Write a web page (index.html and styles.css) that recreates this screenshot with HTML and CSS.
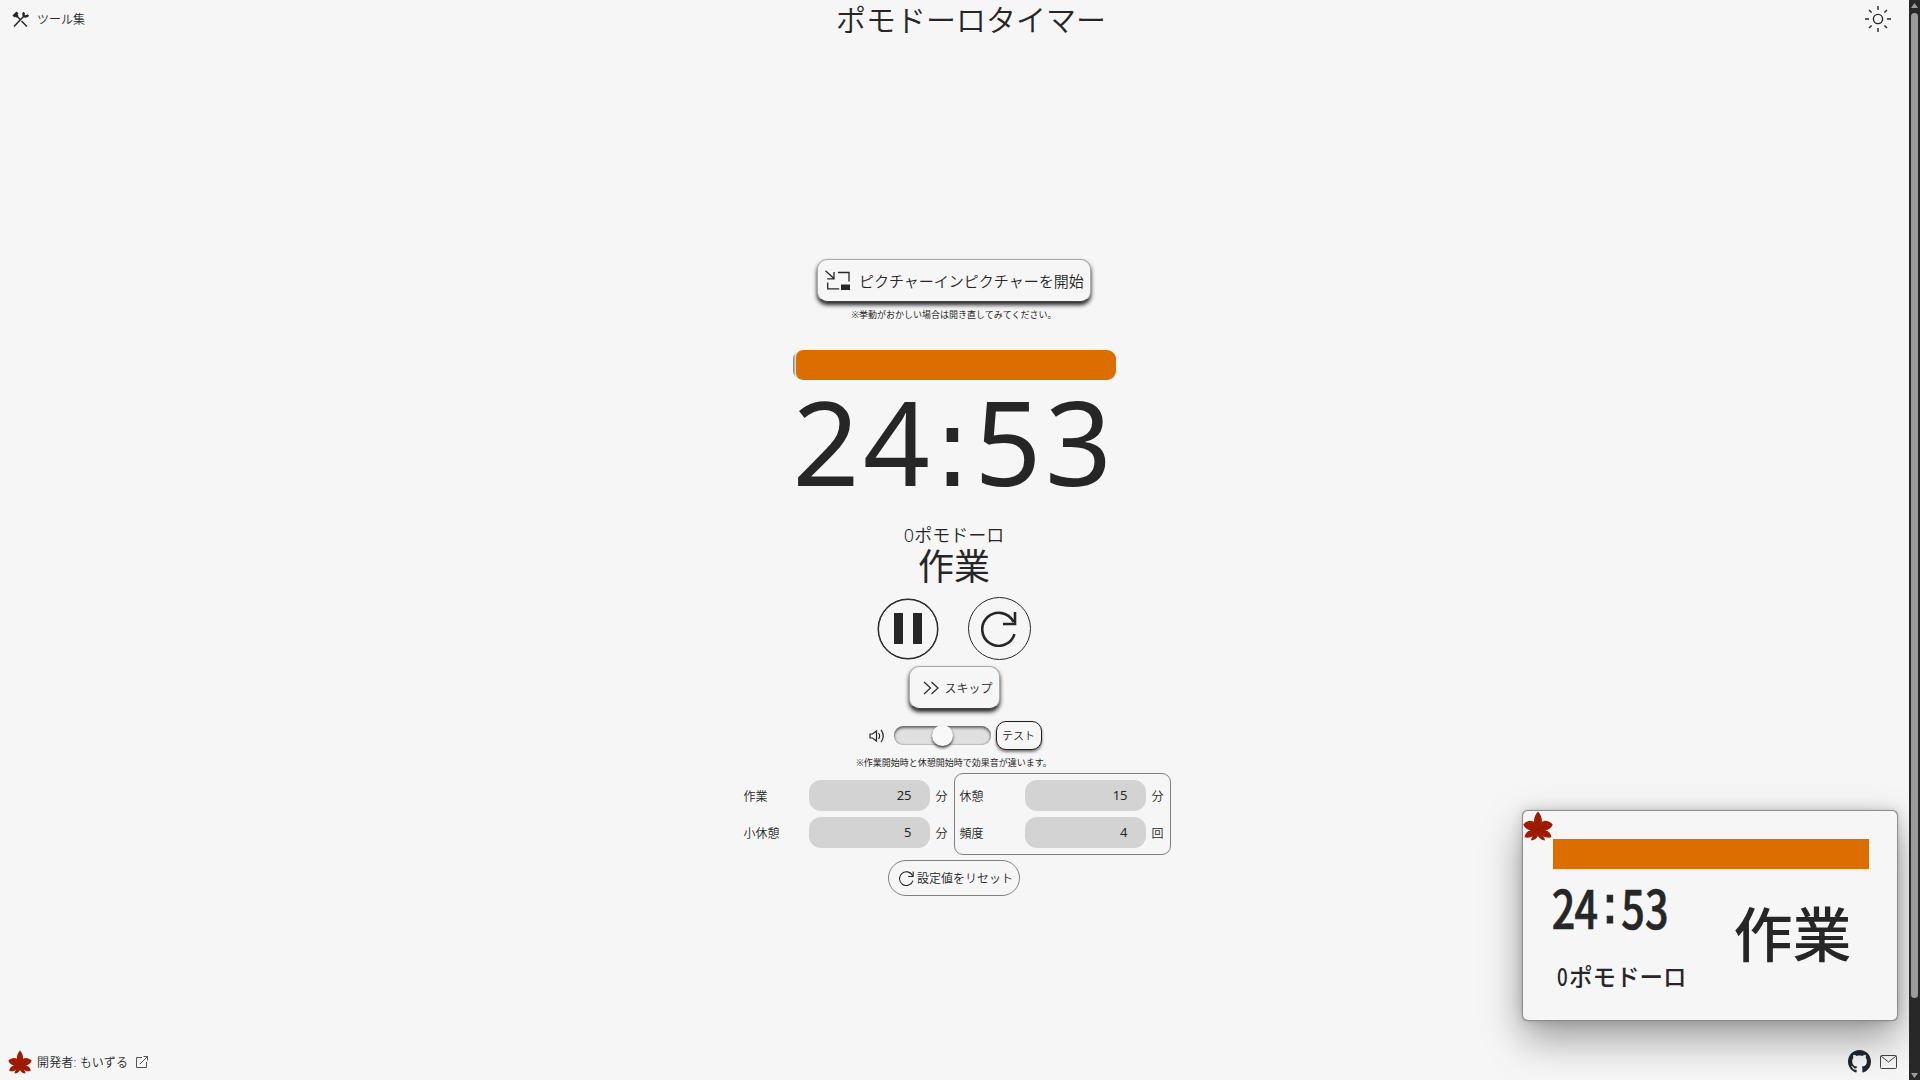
FILE: index.html
```html
<!DOCTYPE html>
<html lang="ja">
<head>
<meta charset="utf-8">
<title>ポモドーロタイマー</title>
<link rel="stylesheet" href="styles.css">
</head>
<body>
<svg class="defs" width="0" height="0" aria-hidden="true">
  <symbol id="maple" viewBox="0 0 30 30">
    <path fill="#a01c00" d="M15 .5C17.500 3.500 19.200 6.500 18.900 11 22 9 26 9.500 29.700 13.500 28 17.500 25.500 18.800 22.500 19.200 26 20.500 28 22.500 28.400 26.200 25.500 27.200 22.500 26.500 20 25 21.200 26.500 22 27.800 21.800 29.500 19 29 16.500 28 15.500 25.500H14.500C13.500 28 11 29 8.200 29.500 8 27.800 8.800 26.500 10 25 7.500 26.500 4.500 27.200 1.600 26.200 2 22.500 4 20.500 7.500 19.200 4.500 18.800 2 17.500.3 13.500 4 9.500 8 9 11.100 11 10.800 6.500 12.500 3.500 15 .5z"/>
    <path fill="none" stroke="#861500" stroke-width=".6" d="M15 8v10.500M6 14.500l9 4 9-4M7 24l8-5.500 8 5.500"/>
  </symbol>
  <symbol id="reload" viewBox="0 0 36 36">
    <path fill="none" stroke="currentColor" d="M33.500 23.200A16.500 16.500 0 1 1 32.500 11M34 1v12H22"/>
  </symbol>
</svg>
<div class="page">
  <header class="header">
    <a class="tools">
      <svg width="17" height="17" viewBox="0 0 17 17" fill="none" stroke="#262626">
        <path stroke-width="1.500" d="M4.500 4.500l4 4.500M9.500 10l5.500 5.500M2 15.500L12 5"/>
        <path stroke-width="3" d="M1.500 5.500l4-4M3 3.500l2.500 2"/>
        <path stroke-width="2.400" d="M12.200 1.500c-1.500 2-.5 4 1 4s2 0 3-1.500"/>
      </svg>
      <span>ツール集</span>
    </a>
    <h1 class="title">ポモドーロタイマー</h1>
    <svg class="sun" width="28" height="28" viewBox="0 0 28 28" fill="none" stroke="#262626" stroke-width="1.400">
      <circle cx="14" cy="14" r="4.600"/>
      <path d="M14 1v4M14 23v4M1 14h4M23 14h4M5 5l2.600 2.600M20.400 20.400L23 23M23 5l-2.600 2.600M7.600 20.400L5 23"/>
    </svg>
  </header>

  <main class="main">
    <button class="btn pip-btn">
      <svg width="26" height="21" viewBox="0 0 26 21" fill="none" stroke="#262626" stroke-width="1.300">
        <path d="M.5.700L9 8.500M9 2v6.800H2.200M13 2.500h11v9M2.700 12.500v6.300h11.500"/>
        <path fill="#262626" stroke="none" d="M16 14.500h9V20h-9z"/>
      </svg>
      <span>ピクチャーインピクチャーを開始</span>
    </button>
    <p class="note">※挙動がおかしい場合は開き直してみてください。</p>
    <div class="progress"><div class="progress-fill"></div></div>
    <div class="clock">24<span class="colon">:</span>53</div>
    <div class="count">0ポモドーロ</div>
    <div class="phase">作業</div>
    <div class="controls">
      <button class="round pause"><i></i><i></i></button>
      <button class="round restart"><svg width="36" height="36"><use href="#reload"/></svg></button>
    </div>
    <button class="btn skip">
      <svg width="16" height="14" viewBox="0 0 16 14" fill="none" stroke="#262626" stroke-width="1.200"><path d="M1 1l6.500 6L1 13M8.500 1L15 7l-6.500 6"/></svg>
      <span>スキップ</span>
    </button>
    <div class="volume">
      <svg width="16" height="16" viewBox="0 0 16 16" fill="none" stroke="#262626" stroke-width="1.200"><path d="M1 6h2.500L7.500 3v10l-4-3H1zM9.500 5q2.200 3 0 6M12 1.800q4.500 6.200 0 12.400"/></svg>
      <div class="slider"><div class="thumb"></div></div>
      <button class="test">テスト</button>
    </div>
    <p class="note note-sound">※作業開始時と休憩開始時で効果音が違います。</p>
    <div class="settings">
      <div class="group">
        <div class="row"><label>作業</label><span class="field">25</span><span>分</span></div>
        <div class="row"><label>小休憩</label><span class="field">5</span><span>分</span></div>
      </div>
      <div class="group boxed">
        <div class="row"><label>休憩</label><span class="field">15</span><span>分</span></div>
        <div class="row"><label>頻度</label><span class="field">4</span><span>回</span></div>
      </div>
    </div>
    <button class="reset"><svg width="15" height="15"><use href="#reload"/></svg><span>設定値をリセット</span></button>
  </main>

  <footer class="footer">
    <a class="author">
      <svg width="24" height="24"><use href="#maple"/></svg>
      <span>開発者: もいずる</span>
      <svg width="12" height="12" viewBox="0 0 12 12" fill="none" stroke="#555"><path d="M6 1.500H.5v10h10V6M4 8l7.500-7.500M7.500.5h4v4"/></svg>
    </a>
    <div class="links">
      <svg width="23" height="23" viewBox="0 0 16 16" fill="#1f262d"><path d="M8 0C3.580 0 0 3.580 0 8c0 3.540 2.290 6.530 5.470 7.590.4.070.55-.17.55-.38 0-.19-.01-.82-.01-1.490-2.010.37-2.530-.49-2.690-.94-.09-.23-.48-.94-.82-1.130-.28-.15-.68-.52-.01-.53.63-.01 1.080.58 1.230.82.72 1.210 1.870.87 2.330.66.07-.52.28-.87.51-1.070-1.780-.2-3.640-.89-3.640-3.950 0-.87.31-1.590.82-2.150-.08-.2-.36-1.020.08-2.120 0 0 .67-.21 2.200.82.64-.18 1.320-.27 2-.27s1.360.09 2 .27c1.530-1.040 2.200-.82 2.200-.82.44 1.100.16 1.920.08 2.120.51.56.82 1.270.82 2.150 0 3.070-1.870 3.750-3.650 3.950.29.25.54.73.54 1.480 0 1.070-.01 1.930-.01 2.200 0 .21.15.46.55.38A8.010 8.010 0 0 0 16 8c0-4.420-3.580-8-8-8z"/></svg>
      <svg width="17" height="14" viewBox="0 0 17 14" fill="none" stroke="#444"><rect x=".5" y=".5" width="16" height="13" rx="1"/><path d="M1 1l7.500 6L16 1"/></svg>
    </div>
  </footer>

  <aside class="pip">
    <svg width="374" height="209" viewBox="0 0 374 209">
      <use href="#maple" width="30" height="30"/>
      <path fill="#dc6e00" d="M30 28h316v30H30z"/>
      <g class="pip-text">
        <text class="pip-clock" transform="translate(0 118) scale(.78 1)" x="52 81" text-anchor="middle">24</text>
        <text class="pip-colon" x="87" y="112" text-anchor="middle">:</text>
        <text class="pip-clock" transform="translate(0 118) scale(.78 1)" x="141 171.500" text-anchor="middle">53</text>
        <text class="pip-count" transform="translate(39.300 175) scale(.8 1)" text-anchor="middle">0</text>
        <text class="pip-count" x="46" y="175">ポモドーロ</text>
        <text class="pip-phase" x="210.500" y="146">作業</text>
      </g>
    </svg>
  </aside>
</div>
<div class="scrollbar">
  <svg width="7" height="5"><path fill="#9c9c9c" d="M0 5L3.500 0 7 5z"/></svg>
  <div class="scroll-track"><div class="scroll-thumb"></div></div>
  <svg width="7" height="5"><path fill="#9c9c9c" d="M0 0h7L3.500 5z"/></svg>
</div>
</body>
</html>
```
FILE: styles.css
```css
* { box-sizing: border-box; }
body {
  margin: 0;
  height: 1080px;
  display: flex;
  overflow: hidden;
  background: #f6f6f6;
  color: #262626;
  font-family: "Noto Sans", "Noto Sans CJK JP", sans-serif;
  font-size: 12px;
  font-weight: 350;
  line-height: 1;
}
svg { display: block; flex: none; }
.defs { position: absolute; }
p, h1 { margin: 0; font-weight: 350; }
button {
  font: inherit;
  color: inherit;
  background: #f6f6f6;
  padding: 0;
  white-space: nowrap;
  display: flex;
  align-items: center;
}
a span, button span, .row label, .row > :last-child { padding-top: 2px; }
.page {
  position: relative;
  flex: 1;
  display: flex;
  flex-direction: column;
}
.header {
  height: 38px;
  display: flex;
  justify-content: space-between;
  align-items: center;
  padding: 0 17px 0 12px;
}
.tools, .author { display: flex; align-items: center; }
.tools { gap: 8px; }
.title { font-size: 30px; padding: 2px 7px 0 0; }

.main {
  flex: 1;
  display: flex;
  flex-direction: column;
  align-items: center;
  padding: 221px 1px 0 0;
}
.btn {
  border: 1px solid #aaa;
  border-bottom-color: #444;
  border-radius: 10px;
  box-shadow: 0 3px 4px #222;
}
.pip-btn {
  width: 274px;
  height: 43px;
  padding-left: 7px;
  gap: 8px;
  font-size: 15px;
}
.note { font-size: 9px; margin-top: 8px; font-weight: 400; }
.progress {
  width: 323px;
  height: 30px;
  margin-top: 31px;
  padding-left: 3px;
  border-radius: 9px;
  background: linear-gradient(90deg, #777, #eee 3px);
  overflow: hidden;
}
.progress-fill { height: 100%; border-radius: 7px 0 0 7px; background: #dc6e00; }
.clock {
  margin-top: 3px;
  height: 116px;
  font-size: 117px;
  font-weight: 400;
  line-height: 116px;
  letter-spacing: 3.500px;
}
.colon { font-family: "DejaVu Sans"; font-size: 112px; line-height: 1px; }
.count { font-size: 18px; margin-top: 27px; }
.phase { font-size: 36px; font-weight: 400; margin-top: 5px; }
.controls { display: flex; align-items: center; gap: 30px; margin-top: 12px; }
.round { border: 1px solid #262626; border-radius: 50%; justify-content: center; }
.pause { width: 60px; height: 60px; gap: 10px; box-shadow: 0 0 0 .5px #262626; }
.pause i { width: 9px; height: 31px; background: #262626; }
.restart { width: 63px; height: 63px; }
.restart svg { stroke-width: 2.600; }
.skip { width: 91px; height: 43px; margin-top: 6px; padding-left: 13px; gap: 6px; }
.volume { display: flex; align-items: center; margin-top: 12px; height: 29px; margin-left: 2px; }
.slider {
  width: 97px;
  height: 19px;
  margin: 0 5px 0 9px;
  border-radius: 10px;
  background: #e0e0e0;
  box-shadow: inset 0 2px 3px #666, inset 0 0 2px #777;
  display: flex;
  align-items: center;
  justify-content: center;
}
.thumb { width: 21px; height: 21px; border-radius: 50%; background: #f8f8f8; box-shadow: 0 2px 3px #444; }
.test {
  width: 46px;
  height: 29px;
  justify-content: center;
  font-size: 11px;
  border: 1.500px solid #1c1c1c;
  border-radius: 10px;
  box-shadow: 0 2px 3px #777;
}
.note-sound { margin-top: 8px; }
.settings { display: flex; margin-top: 6px; padding-left: 6px; }
.group { display: flex; flex-direction: column; gap: 6px; padding: 7px 0; width: 210px; }
.boxed { width: 217px; height: 82px; padding: 6px 0 6px 5px; border: 1px solid #808080; border-radius: 9px; }
.row { display: grid; grid-template-columns: 65px 121px 12px; height: 31px; align-items: center; }
.row > :last-child { margin-left: 6px; }
.field {
  height: 31px;
  border-radius: 12px;
  background: #d3d3d3;
  text-align: right;
  padding-right: 18px;
  font-size: 13px;
  font-weight: 400;
  line-height: 31px;
}
.reset {
  width: 132px;
  height: 36px;
  margin-top: 5px;
  padding-left: 10px;
  gap: 3px;
  border: 1px solid #808080;
  border-radius: 18px;
}
.reset svg { stroke-width: 2.600; }
.footer {
  height: 37px;
  display: flex;
  justify-content: space-between;
  align-items: center;
  padding: 0 12px 0 8px;
}
.author span { margin: 0 8px 0 5px; letter-spacing: .15px; }
.links { display: flex; align-items: center; gap: 9px; }
.pip {
  position: absolute;
  left: 1523px;
  top: 811px;
  width: 374px;
  height: 209px;
  border-radius: 5px;
  background: #f6f6f6;
  box-shadow: 0 0 1px .5px #888, 0 18px 40px rgba(0, 0, 0, .38), 0 0 14px rgba(0, 0, 0, .18);
}
.pip-text { fill: #262626; font-family: "Noto Sans CJK JP", sans-serif; font-weight: 500; }
.pip-clock { font-size: 53px; stroke: #262626; stroke-width: .7px; }
.pip-colon { font-family: "DejaVu Sans"; font-size: 53px; stroke: #262626; stroke-width: 1px; }
.pip-count { font-size: 23.500px; }
.pip-phase { font-size: 59px; }
.scrollbar {
  flex: none;
  position: relative;
  width: 11px;
  background: #282828;
  display: flex;
  flex-direction: column;
  align-items: center;
  padding: 3px 0 2px;
}
.scroll-track { flex: 1; padding-top: 5px; }
.scroll-thumb { width: 7px; height: 985px; border-radius: 4px; background: #9c9c9c; }
```
